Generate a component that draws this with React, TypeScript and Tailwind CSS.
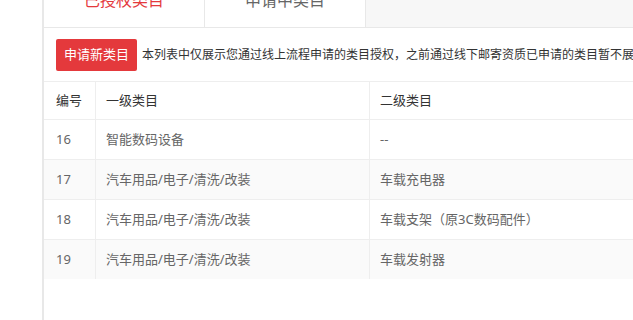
const rows = [
  { id: "16", first: "智能数码设备", second: "--" },
  { id: "17", first: "汽车用品/电子/清洗/改装", second: "车载充电器" },
  { id: "18", first: "汽车用品/电子/清洗/改装", second: "车载支架（原3C数码配件）" },
  { id: "19", first: "汽车用品/电子/清洗/改装", second: "车载发射器" },
];

const App = () => {
  return (
    <div className="w-[633px] h-[320px] overflow-hidden bg-white font-['Noto_Sans','Noto_Sans_CJK_SC',sans-serif]">
      <div className="ml-[42px] h-[340px] w-[900px] -mt-[20px] border-l-2 border-[#e8e8e8]">
        {/* tabs */}
        <div className="flex h-[48px] border-b border-[#e8e8e8] bg-[#f7f7f7]">
          <div className="w-[161px] border-r border-[#e8e8e8] bg-white pt-[8px] text-center text-[16px] leading-[24px] text-[#e4393c]">
            已授权类目
          </div>
          <div className="w-[161px] border-r border-[#e8e8e8] bg-white pt-[8px] text-center text-[16px] leading-[24px] text-[#666]">
            申请中类目
          </div>
        </div>

        {/* toolbar */}
        <div className="flex items-center pl-[12px] pt-[11px] pb-[10px]">
          <button className="h-[32px] rounded-[2px] bg-[#e4393c] px-[8px] text-[13px] text-white">
            申请新类目
          </button>
          <span className="ml-[5px] whitespace-nowrap text-[12px] text-[#333]">
            本列表中仅展示您通过线上流程申请的类目授权，之前通过线下邮寄资质已申请的类目暂不展示，如有疑问请联系类目运营。
          </span>
        </div>

        {/* table */}
        <div className="text-[13px]">
          <div className="flex h-[38px] items-center border-t border-[#eee] text-[#333]">
            <div className="flex h-full w-[52px] items-center border-r border-[#eee] pl-[12px]">编号</div>
            <div className="flex h-full w-[274px] items-center border-r border-[#eee] pl-[10px]">一级类目</div>
            <div className="flex h-full flex-1 items-center pl-[10px]">二级类目</div>
          </div>
          {rows.map((row, i) => (
            <div
              key={row.id}
              className={`flex h-[40px] items-center border-t border-[#eee] text-[#666] ${
                i % 2 === 1 ? "bg-[#fafafa]" : "bg-white"
              }`}
            >
              <div className="flex h-full w-[52px] items-center border-r border-[#eee] pl-[12px]">{row.id}</div>
              <div className="flex h-full w-[274px] items-center border-r border-[#eee] pl-[10px]">{row.first}</div>
              <div className="flex h-full flex-1 items-center pl-[10px]">{row.second}</div>
            </div>
          ))}
        </div>
      </div>
    </div>
  );
};

export default App;
